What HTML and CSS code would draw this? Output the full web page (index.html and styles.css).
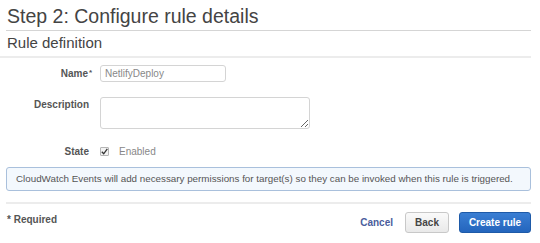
FILE: index.html
```html
<!DOCTYPE html>
<html lang="en">
<head>
    <meta charset="UTF-8">
    <title>Step 2: Configure rule details</title>
    <link rel="stylesheet" href="styles.css">
</head>
<body>

<div class="wizard">
    <!--标题-->
    <h1 class="wizard-title">Step 2: Configure rule details</h1>
    <h2 class="wizard-section">Rule definition</h2>

    <!--表单-->
    <div class="rule-form">
        <div class="form-row form-row-name">
            <label class="rule-label" for="rule_name">Name<span class="req">*</span></label>
            <input id="rule_name" class="rule-input" type="text" value="NetlifyDeploy">
        </div>

        <div class="form-row form-row-desc">
            <label class="rule-label" for="rule_desc">Description</label>
            <textarea id="rule_desc" class="rule-textarea"></textarea>
        </div>

        <div class="form-row form-row-state">
            <span class="rule-label">State</span>
            <span class="check">
                <svg width="7" height="7" viewBox="0 0 7 7"><path d="M0.8 3.8 L2.7 5.8 L6.3 0.9" fill="none" stroke="#333" stroke-width="1.3"/></svg>
            </span>
            <span class="state-text">Enabled</span>
        </div>
    </div>

    <!--提示-->
    <div class="info-box">CloudWatch Events will add necessary permissions for target(s) so they can be invoked when this rule is triggered.</div>

    <!--底部-->
    <div class="wizard-footer">
        <span class="required">* Required</span>
        <div class="footer-actions">
            <a class="link-cancel" href="">Cancel</a>
            <button class="btn btn-back">Back</button>
            <button class="btn btn-primary">Create rule</button>
        </div>
    </div>
</div>

</body>
</html>
```

FILE: styles.css
```css
* {
    margin: 0;
    padding: 0;
    box-sizing: border-box;
}

body {
    background-color: #fff;
    font-family: "Liberation Sans", Arial, sans-serif;
    color: #444;
}

/*整个页面内容*/
.wizard {
    width: 531px;
    padding-left: 6px;
}

.wizard-title {
    font-size: 19.5px;
    font-weight: normal;
    line-height: 22px;
    padding: 5px 0 3px 1px;
    border-bottom: 1px solid #d5d5d5;
    color: #444;
}

.wizard-section {
    font-size: 15px;
    font-weight: normal;
    line-height: 18px;
    padding: 3px 0 4px 7px;
    border-bottom: 2px solid #ececec;
    margin-left: -6px;
    color: #444;
}

/*表单部分*/
.rule-form {
    padding-top: 7px;
}

.form-row {
    display: flex;
    align-items: center;
}

.form-row-desc {
    margin-top: 15px;
    align-items: flex-start;
}

.form-row-state {
    margin-top: 16px;
    height: 12px;
}

.rule-label {
    width: 83px;
    margin-right: 11px;
    font-size: 10px;
    font-weight: bold;
    color: #555;
    text-align: right;
}

.form-row-desc .rule-label {
    padding-top: 2px;
}

.req {
    display: inline-block;
    width: 0;
    font-size: 8px;
    vertical-align: top;
    margin-left: 1px;
}

.rule-input {
    width: 126px;
    height: 17px;
    border: 1px solid #d4d4d4;
    border-radius: 3px;
    padding: 0 4px;
    font-family: "Liberation Sans", Arial, sans-serif;
    font-size: 10px;
    color: #888;
}

.rule-textarea {
    width: 210px;
    height: 32px;
    border: 1px solid #d4d4d4;
    border-radius: 3px;
    font-family: "Liberation Sans", Arial, sans-serif;
}

.check {
    width: 9px;
    height: 9px;
    border: 1px solid #b5b5b5;
    border-radius: 1px;
    background-color: #f3f3f3;
    display: flex;
    align-items: center;
    justify-content: center;
}

.state-text {
    font-size: 10px;
    color: #888;
    margin-left: 10px;
}

/*提示框*/
.info-box {
    margin-top: 10px;
    height: 24px;
    border: 1px solid #a9c0dc;
    border-radius: 3px;
    background-color: #f3f8fd;
    font-size: 9.8px;
    color: #555;
    line-height: 22px;
    padding-left: 9px;
    white-space: nowrap;
}

/*底部按钮*/
.wizard-footer {
    margin-top: 11px;
    border-top: 2px solid #ececec;
    display: flex;
    justify-content: space-between;
    align-items: center;
    padding-top: 8px;
}

.required {
    font-size: 10px;
    font-weight: bold;
    color: #555;
    padding-left: 1px;
    margin-top: -6px;
}

.footer-actions {
    display: flex;
    align-items: center;
}

.link-cancel {
    font-size: 10px;
    font-weight: bold;
    color: #4a5d9c;
    text-decoration: none;
    margin-right: 12px;
}

.btn {
    height: 21px;
    border-radius: 3px;
    font-family: "Liberation Sans", Arial, sans-serif;
    font-size: 10px;
    font-weight: bold;
    cursor: pointer;
}

.btn-back {
    width: 44px;
    border: 1px solid #c8c8c8;
    background: linear-gradient(#fafafa, #e9e9e9);
    color: #444;
    margin-right: 10px;
}

.btn-primary {
    width: 72px;
    border: 1px solid #1e5aa8;
    background: linear-gradient(#3a7ed3, #2465bd);
    color: #fff;
}
```
